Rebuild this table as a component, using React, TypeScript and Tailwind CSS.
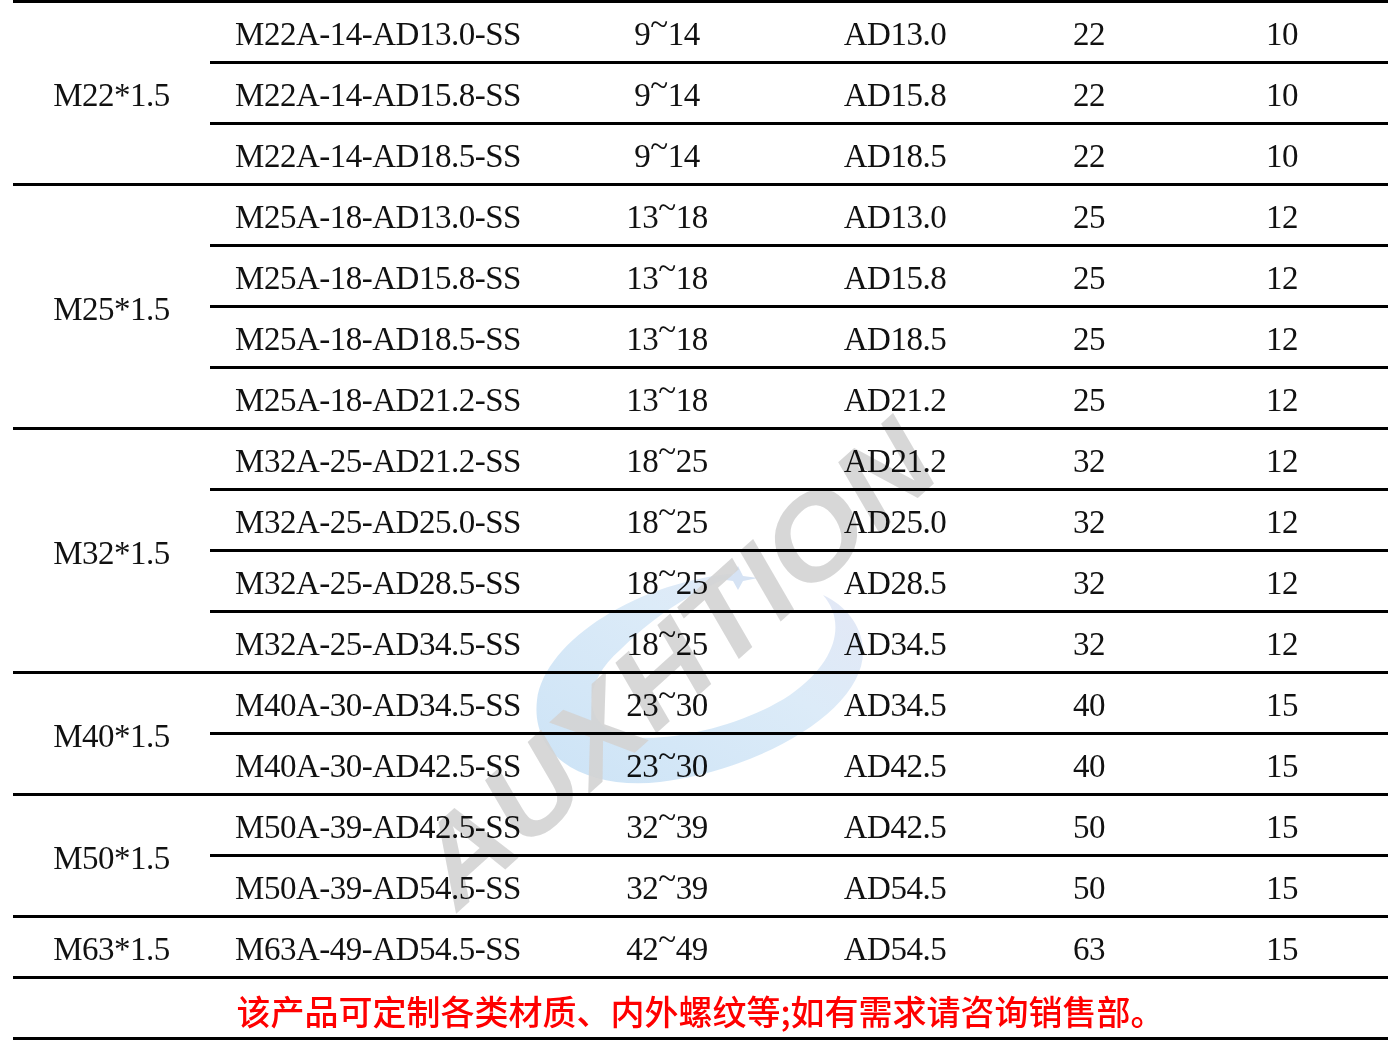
type Row = [string, string, string, string, string];

const groups: { thread: string; rows: Row[] }[] = [
  {
    thread: 'M22*1.5',
    rows: [
      ['M22A-14-AD13.0-SS', '9~14', 'AD13.0', '22', '10'],
      ['M22A-14-AD15.8-SS', '9~14', 'AD15.8', '22', '10'],
      ['M22A-14-AD18.5-SS', '9~14', 'AD18.5', '22', '10'],
    ],
  },
  {
    thread: 'M25*1.5',
    rows: [
      ['M25A-18-AD13.0-SS', '13~18', 'AD13.0', '25', '12'],
      ['M25A-18-AD15.8-SS', '13~18', 'AD15.8', '25', '12'],
      ['M25A-18-AD18.5-SS', '13~18', 'AD18.5', '25', '12'],
      ['M25A-18-AD21.2-SS', '13~18', 'AD21.2', '25', '12'],
    ],
  },
  {
    thread: 'M32*1.5',
    rows: [
      ['M32A-25-AD21.2-SS', '18~25', 'AD21.2', '32', '12'],
      ['M32A-25-AD25.0-SS', '18~25', 'AD25.0', '32', '12'],
      ['M32A-25-AD28.5-SS', '18~25', 'AD28.5', '32', '12'],
      ['M32A-25-AD34.5-SS', '18~25', 'AD34.5', '32', '12'],
    ],
  },
  {
    thread: 'M40*1.5',
    rows: [
      ['M40A-30-AD34.5-SS', '23~30', 'AD34.5', '40', '15'],
      ['M40A-30-AD42.5-SS', '23~30', 'AD42.5', '40', '15'],
    ],
  },
  {
    thread: 'M50*1.5',
    rows: [
      ['M50A-39-AD42.5-SS', '32~39', 'AD42.5', '50', '15'],
      ['M50A-39-AD54.5-SS', '32~39', 'AD54.5', '50', '15'],
    ],
  },
  {
    thread: 'M63*1.5',
    rows: [['M63A-49-AD54.5-SS', '42~49', 'AD54.5', '63', '15']],
  },
];

// widths of the five right-hand columns
const colW = ['w-[336px]', 'w-[242px]', 'w-[214px]', 'w-[174px]', 'w-[212px]'];

const Range = ({ value }: { value: string }) => {
  const [a, b] = value.split('~');
  return (
    <span>
      {a}
      <span className="inline-block -translate-y-[0.3em]">~</span>
      {b}
    </span>
  );
};

const Watermark = () => (
  <svg
    className="pointer-events-none absolute inset-0 mix-blend-multiply"
    width="1400"
    height="1056"
    viewBox="0 0 1400 1056"
  >
    <defs>
      <linearGradient id="swoosh" x1="0" y1="1" x2="1" y2="0">
        <stop offset="0" stopColor="#cce3f6" />
        <stop offset="0.6" stopColor="#dcebf8" />
        <stop offset="1" stopColor="#e4e7f5" />
      </linearGradient>
    </defs>
    <path
      fill="url(#swoosh)"
      d="M740 573 C 640 580 545 640 537 700 C 530 760 590 790 660 782 C 760 770 865 710 863 650 C 862 625 845 605 823 595 C 845 620 840 660 790 695 C 740 728 660 745 620 735 C 580 722 585 680 620 650 C 660 610 700 588 740 573 Z"
    />
    <path fill="#d6e3f4" d="M738 566 L743 576 L758 578 L743 581 L738 590 L733 581 L712 578 L733 575 Z" />
    <text
      x="0"
      y="0"
      transform="translate(458 912) rotate(-42)"
      fontFamily="'Liberation Sans', Arial, sans-serif"
      fontWeight="700"
      fontStyle="italic"
      fontSize="116"
      textLength="655"
      lengthAdjust="spacingAndGlyphs"
      fill="#d3d3d3"
      fillOpacity="0.9"
    >
      AUXHTION
    </text>
  </svg>
);

export default function App() {
  return (
    <div className="relative h-[1056px] w-[1400px] bg-white">
      <div className="ml-[13px] w-[1375px] border-t-[3px] border-black font-['Liberation_Serif',serif] text-[33px] tracking-[-0.5px] text-[#111]">
        {groups.map(g => (
          <div key={g.thread} className="flex border-b-[3px] border-black">
            <div className="flex w-[197px] items-center justify-center pt-[6px]">{g.thread}</div>
            <div className="flex flex-col">
              {g.rows.map((r, i) => (
                <div
                  key={r[0]}
                  className={`box-content flex h-[52px] items-center pt-[6px] ${i < g.rows.length - 1 ? 'border-b-[3px] border-black' : ''}`}
                >
                  {r.map((cell, j) => (
                    <div key={j} className={`${colW[j]} text-center`}>
                      {j === 1 ? <Range value={cell} /> : cell}
                    </div>
                  ))}
                </div>
              ))}
            </div>
          </div>
        ))}
        <div className="box-content flex h-[54px] items-center justify-center border-b-[3px] border-black pt-[4px] font-['Noto_Sans_CJK_SC',sans-serif] text-[34px] font-medium tracking-normal text-[#ff0000]">
          该产品可定制各类材质、内外螺纹等;如有需求请咨询销售部。
        </div>
      </div>
      <Watermark />
    </div>
  );
}
